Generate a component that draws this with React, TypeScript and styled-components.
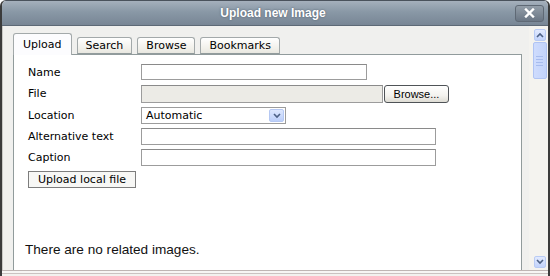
import styled, { createGlobalStyle } from 'styled-components';

const GlobalStyle = createGlobalStyle`
  html, body {
    margin: 0;
    padding: 0;
    background: #ffffff;
  }
`;

const Window = styled.div`
  width: 550px;
  height: 276px;
  box-sizing: border-box;
  display: flex;
  flex-direction: column;
  overflow: hidden;
  background: #f0f0ee;
  border-left: 2px solid #3b3b3b;
  border-right: 2px solid #3b3b3b;
  border-top: 1px solid #4a525c;
  border-top-left-radius: 6px;
  border-top-right-radius: 6px;
  font-family: 'DejaVu Sans', Verdana, sans-serif;
  font-size: 11px;
  color: #000;
`;

const TitleBar = styled.div`
  flex: none;
  height: 24px;
  display: grid;
  grid-template-columns: 1fr auto 1fr;
  align-items: center;
  padding-right: 4px;
  background: linear-gradient(#a5b0bc 0%, #8998a6 45%, #788695 100%);
  border-bottom: 1px solid #5d6976;
`;

const Title = styled.div`
  grid-column: 2;
  font-family: 'Liberation Sans', Arial, sans-serif;
  font-weight: bold;
  font-size: 12px;
  color: #ffffff;
  text-shadow: 0 0 2px #4c5866;
`;

const CloseButton = styled.div`
  grid-column: 3;
  justify-self: end;
  width: 29px;
  height: 17px;
  box-sizing: border-box;
  display: flex;
  align-items: center;
  justify-content: center;
  border: 1px solid #5f6975;
  border-radius: 3px;
  background: linear-gradient(#939ea9, #6a7684);
`;

const Body = styled.div`
  flex: none;
  height: 244px;
  display: flex;
  border-left: 1px solid #c9c9c5;
`;

const Main = styled.div`
  flex: 1;
  min-width: 0;
  overflow: hidden;
  padding: 7px 7px 0 10px;
  display: flex;
  flex-direction: column;
`;

const TabBar = styled.div`
  display: flex;
  align-items: flex-end;
  gap: 5px;
  height: 21px;
`;

const Tab = styled.div<{ $active?: boolean }>`
  position: relative;
  z-index: 1;
  box-sizing: border-box;
  height: ${p => (p.$active ? 22 : 17)}px;
  margin-bottom: ${p => (p.$active ? -1 : 0)}px;
  padding: 0 ${p => (p.$active ? 9 : 8)}px;
  display: flex;
  align-items: center;
  border: 1px solid #a3a9aa;
  border-bottom: ${p => (p.$active ? 'none' : '1px solid #919b9c')};
  border-radius: 3px 3px 0 0;
  background: ${p =>
    p.$active ? '#fcfcfe' : 'linear-gradient(#ffffff, #f1f0ea 70%, #e8e7e0)'};
  color: #000;
`;

const Panel = styled.div`
  flex: none;
  height: 260px;
  background: #ffffff;
  border: 1px solid #919b9c;
  padding: 7px 0 0 14px;
`;

const Row = styled.div<{ $h: number }>`
  height: ${p => p.$h}px;
  display: flex;
  align-items: center;
`;

const Label = styled.div`
  width: 113px;
  flex: none;
`;

const TextInput = styled.div<{ $w: number; $h?: number; $disabled?: boolean }>`
  width: ${p => p.$w}px;
  height: ${p => p.$h ?? 17}px;
  box-sizing: border-box;
  border: 1px solid #9c9c9c;
  border-top-color: #8a8a8a;
  background: ${p => (p.$disabled ? '#ecebe6' : '#ffffff')};
`;

const BrowseButton = styled.div`
  width: 65px;
  height: 18px;
  box-sizing: border-box;
  margin-left: 1px;
  display: flex;
  align-items: center;
  justify-content: center;
  border: 1px solid #4f5357;
  border-radius: 3px;
  background: linear-gradient(#ffffff, #f3f2ee 60%, #dedcd4);
  font-family: 'Liberation Sans', Arial, sans-serif;
  font-size: 11px;
`;

const Select = styled.div`
  width: 145px;
  height: 17px;
  box-sizing: border-box;
  display: flex;
  align-items: center;
  justify-content: space-between;
  padding: 0 1px 0 4px;
  border: 1px solid #9c9c9c;
  background: #ffffff;
`;

const SelectArrow = styled.div`
  width: 15px;
  height: 13px;
  box-sizing: border-box;
  display: flex;
  align-items: center;
  justify-content: center;
  border: 1px solid #b5c8f3;
  border-radius: 2px;
  background: linear-gradient(#dde7fe, #bccff9);
`;

const PlainButton = styled.div`
  width: 108px;
  height: 17px;
  box-sizing: border-box;
  display: flex;
  align-items: center;
  justify-content: center;
  border: 1px solid #7d7d7d;
  background: #f7f7f5;
`;

const EmptyNote = styled.div`
  margin: 52px 0 0 -3px;
  font-family: 'Liberation Sans', Arial, sans-serif;
  font-size: 13.6px;
  line-height: 16px;
  color: #111;
`;

const ScrollBar = styled.div`
  flex: none;
  width: 19px;
  display: flex;
  flex-direction: column;
  align-items: center;
  padding: 3px 0 2px 2px;
  box-sizing: border-box;
  background: #f4f3ef;
`;

const ScrollButton = styled.div`
  width: 12px;
  height: 12px;
  box-sizing: border-box;
  display: flex;
  align-items: center;
  justify-content: center;
  border: 1px solid #b9cbf4;
  border-radius: 2px;
  background: linear-gradient(#e2eafe, #c2d3fb);
`;

const Thumb = styled.div`
  width: 14px;
  height: 37px;
  box-sizing: border-box;
  margin-top: 1px;
  display: flex;
  flex-direction: column;
  align-items: center;
  justify-content: center;
  gap: 2px;
  border: 1px solid #b0c4f3;
  border-radius: 2px;
  background: linear-gradient(90deg, #cfdcfd, #c2d3fb);
`;

const Grip = styled.div`
  width: 7px;
  height: 1px;
  background: #a7bcee;
`;

const Track = styled.div`
  flex: 1;
`;

const Footer = styled.div`
  flex: 1;
  border-top: 1px solid #bfb6b4;
  box-shadow: inset 0 2px 0 #f7f6f4, inset 0 3px 0 #cbc3c1;
  background: #f3f2ef;
`;

const Chevron = ({ up }: { up?: boolean }) => (
  <svg width="8" height="6" viewBox="0 0 8 6">
    <path
      d={up ? 'M1 5 L4 2 L7 5' : 'M1 1 L4 4 L7 1'}
      fill="none"
      stroke="#4d6185"
      strokeWidth="1.6"
    />
  </svg>
);

const CloseIcon = () => (
  <svg width="11" height="10" viewBox="0 0 11 10">
    <path
      d="M2 1.5 L9 8.5 M9 1.5 L2 8.5"
      fill="none"
      stroke="#ffffff"
      strokeWidth="2.4"
      strokeLinecap="square"
    />
  </svg>
);

const App = function () {
  return (
    <>
      <GlobalStyle />
      <Window>
        <TitleBar>
          <Title>Upload new Image</Title>
          <CloseButton>
            <CloseIcon />
          </CloseButton>
        </TitleBar>
        <Body>
          <Main>
            <TabBar>
              <Tab $active>Upload</Tab>
              <Tab>Search</Tab>
              <Tab>Browse</Tab>
              <Tab>Bookmarks</Tab>
            </TabBar>
            <Panel>
              <Row $h={20}>
                <Label>Name</Label>
                <TextInput $w={226} $h={16} />
              </Row>
              <Row $h={23}>
                <Label>File</Label>
                <TextInput $w={242} $h={18} $disabled />
                <BrowseButton>Browse...</BrowseButton>
              </Row>
              <Row $h={21}>
                <Label>Location</Label>
                <Select>
                  <span>Automatic</span>
                  <SelectArrow>
                    <Chevron />
                  </SelectArrow>
                </Select>
              </Row>
              <Row $h={21}>
                <Label>Alternative text</Label>
                <TextInput $w={295} />
              </Row>
              <Row $h={21}>
                <Label>Caption</Label>
                <TextInput $w={295} />
              </Row>
              <Row $h={22}>
                <PlainButton>Upload local file</PlainButton>
              </Row>
              <EmptyNote>There are no related images.</EmptyNote>
            </Panel>
          </Main>
          <ScrollBar>
            <ScrollButton>
              <Chevron up />
            </ScrollButton>
            <Thumb>
              <Grip />
              <Grip />
              <Grip />
              <Grip />
            </Thumb>
            <Track />
            <ScrollButton>
              <Chevron />
            </ScrollButton>
          </ScrollBar>
        </Body>
        <Footer />
      </Window>
    </>
  );
};

export default App;
